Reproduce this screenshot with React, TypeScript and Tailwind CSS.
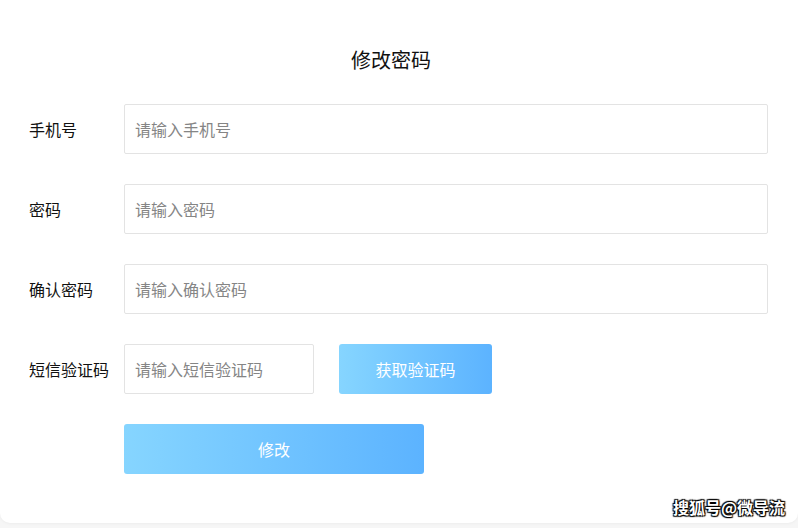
import React from 'react';

const font = { fontFamily: '"Noto Sans CJK SC", "Noto Sans", sans-serif' };

function Field({ label, placeholder }: { label: string; placeholder: string }) {
  return (
    <div className="flex items-center">
      <label className="w-[95px] shrink-0 text-[16px] text-[#111]">{label}</label>
      <input
        className="h-[50px] flex-1 rounded-[2px] border border-[#e3e3e3] px-[10px] text-[16px] text-[#333] outline-none placeholder:text-[#858585]"
        placeholder={placeholder}
      />
    </div>
  );
}

export default function App() {
  return (
    <div className="h-[528px] w-[798px] overflow-hidden bg-[#f6f6f6]" style={font}>
      <div className="relative h-[523px] w-full rounded-b-[10px] bg-white shadow-[0_1px_3px_rgba(0,0,0,0.04)]">
        <h2 className="pt-[46px] pr-[16px] text-center text-[20px] leading-[28px] text-[#111]">修改密码</h2>

        <div className="mt-[30px] flex flex-col gap-[30px] pl-[29px] pr-[30px]">
          <Field label="手机号" placeholder="请输入手机号" />
          <Field label="密码" placeholder="请输入密码" />
          <Field label="确认密码" placeholder="请输入确认密码" />

          <div className="flex items-center">
            <label className="w-[95px] shrink-0 text-[16px] text-[#111]">短信验证码</label>
            <input
              className="h-[50px] w-[190px] rounded-[2px] border border-[#e3e3e3] px-[10px] text-[16px] text-[#333] outline-none placeholder:text-[#858585]"
              placeholder="请输入短信验证码"
            />
            <button className="ml-[25px] h-[50px] w-[153px] rounded-[3px] bg-gradient-to-r from-[#86d5ff] to-[#5cb3ff] text-[16px] text-white">
              获取验证码
            </button>
          </div>

          <div className="pl-[95px]">
            <button className="h-[50px] w-[300px] rounded-[3px] bg-gradient-to-r from-[#86d5ff] to-[#5cb3ff] text-[16px] text-white">
              修改
            </button>
          </div>
        </div>

        <div className="absolute right-[13px] bottom-[4px] text-[16px] font-bold text-white [text-shadow:0_0_1px_#000,1px_1px_1px_#000,-1px_-1px_1px_#000,1px_-1px_1px_#000,-1px_1px_1px_#000]">
          搜狐号@微导流
        </div>
      </div>
    </div>
  );
}
